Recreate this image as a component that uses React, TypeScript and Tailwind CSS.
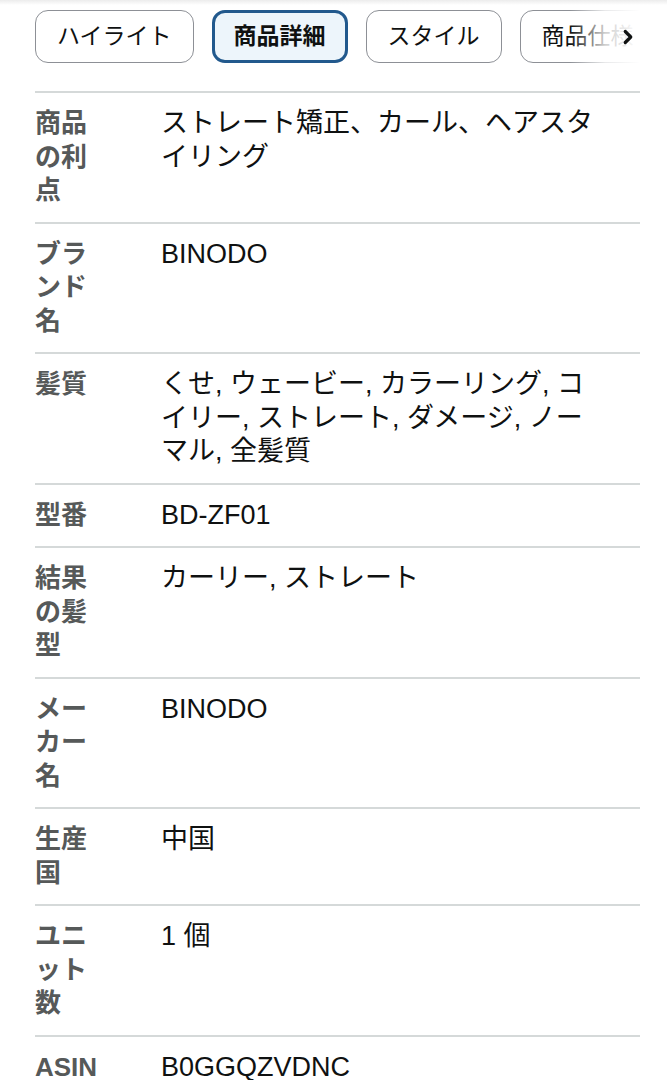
import { ChevronRight } from 'lucide-react'

const tabs = ['ハイライト', '商品詳細', 'スタイル', '商品仕様']

const rows: { label: string; value: string }[] = [
  { label: '商品の利点', value: 'ストレート矯正、カール、ヘアスタイリング' },
  { label: 'ブランド名', value: 'BINODO' },
  { label: '髪質', value: 'くせ, ウェービー, カラーリング, コイリー, ストレート, ダメージ, ノーマル, 全髪質' },
  { label: '型番', value: 'BD-ZF01' },
  { label: '結果の髪型', value: 'カーリー, ストレート' },
  { label: 'メーカー名', value: 'BINODO' },
  { label: '生産国', value: '中国' },
  { label: 'ユニット数', value: '1 個' },
  { label: 'ASIN', value: 'B0GGQZVDNC' },
]

export default function App() {
  return (
    <div
      className="relative w-[667px] h-[1080px] overflow-hidden bg-white"
      style={{ fontFamily: '"Liberation Sans", "Noto Sans CJK JP", sans-serif' }}
    >
      {/* faint shadow from the bar above */}
      <div className="absolute inset-x-0 top-0 h-[5px] bg-gradient-to-b from-[#ececec] to-white" />

      <div className="pl-[35px] pr-[27px] pt-[10px]">
        {/* Tabs */}
        <div className="relative overflow-hidden">
          <div className="flex gap-[18px] whitespace-nowrap">
            {tabs.map((tab, i) => {
              const active = i === 1
              return (
                <div
                  key={tab}
                  className={
                    active
                      ? 'shrink-0 flex h-[53px] items-center rounded-[13px] border-[3px] border-[#22598d] bg-[#edf5fb] px-[19px] text-[23px] font-bold text-[#0f1111]'
                      : 'shrink-0 flex h-[53px] items-center rounded-[13px] border-[1.5px] border-[#8d9096] bg-white px-[21px] text-[23px] text-[#0f1111]'
                  }
                >
                  {tab}
                </div>
              )
            })}
          </div>
          <div className="absolute inset-y-0 right-0 w-[70px] bg-gradient-to-r from-white/0 via-white/80 to-white" />
          <ChevronRight
            className="absolute right-[1px] top-[16px] text-[#0f1111]"
            size={22}
            strokeWidth={3.5}
          />
        </div>

        {/* Detail rows */}
        <div className="mt-[28px] border-t-2 border-[#d5d9d9]">
          {rows.map((row) => (
            <div key={row.label} className="flex border-b-2 border-[#d5d9d9] py-[14px]">
              <div className="w-[72px] shrink-0 break-all text-[26px] font-bold leading-[33.5px] text-[#565959]">
                {row.label}
              </div>
              <div className="ml-[54px] w-[440px] break-all text-[27px] leading-[33.5px] text-[#0f1111]">
                {row.value}
              </div>
            </div>
          ))}
        </div>
      </div>
    </div>
  )
}
